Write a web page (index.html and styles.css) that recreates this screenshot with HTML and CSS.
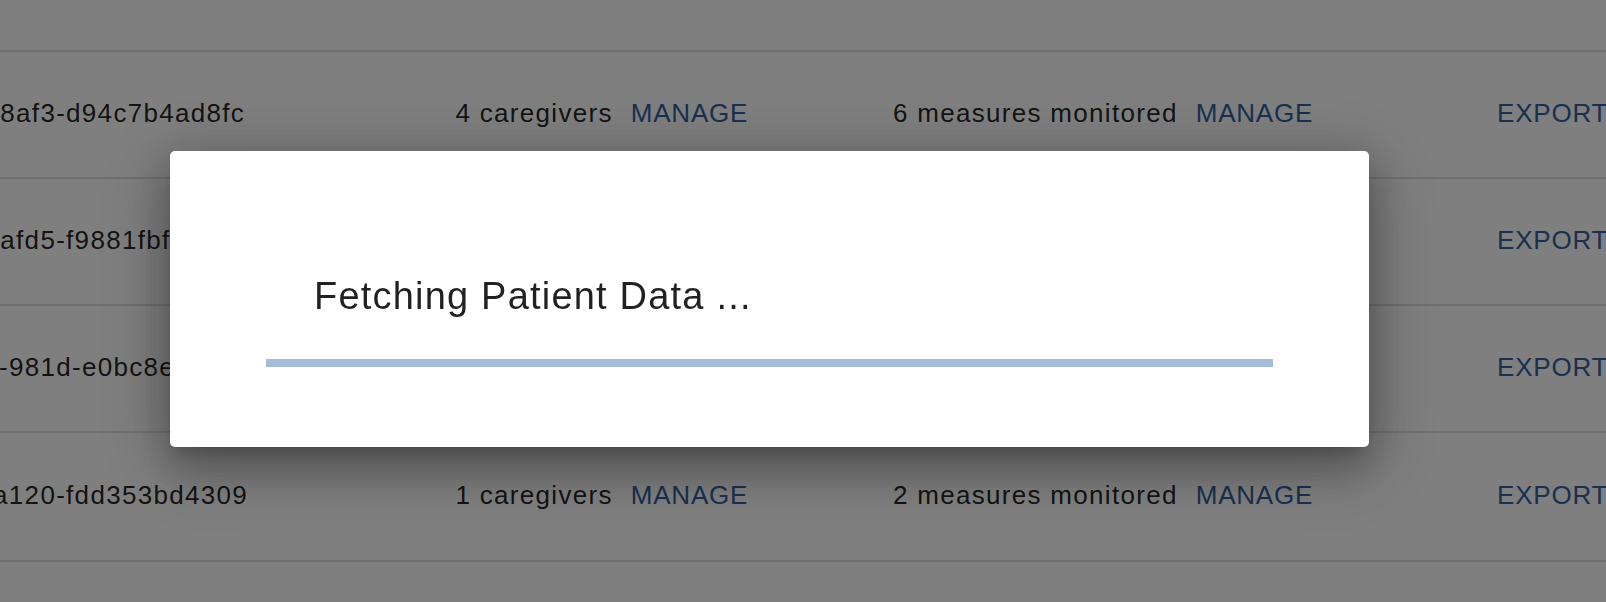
FILE: index.html
```html
<!DOCTYPE html>
<html lang="en">
<head>
<meta charset="utf-8">
<title>Patients</title>
<link rel="stylesheet" href="styles.css">
</head>
<body>
<main class="page">
  <div class="table">
    <div class="row">
      <div class="cell cell-id">4b8e21d7-3c9a-4e5d-b260-c7e4f19a83d5</div>
      <div class="cell"><span>3 caregivers</span><button class="link">MANAGE</button></div>
      <div class="cell"><span>4 measures monitored</span><button class="link">MANAGE</button></div>
      <div class="cell"><button class="link">EXPORT</button></div>
    </div>
    <div class="row">
      <div class="cell cell-id">5e0b27c4-9d1a-4f6e-8af3-d94c7b4ad8fc</div>
      <div class="cell"><span>4 caregivers</span><button class="link">MANAGE</button></div>
      <div class="cell"><span>6 measures monitored</span><button class="link">MANAGE</button></div>
      <div class="cell"><button class="link">EXPORT</button></div>
    </div>
    <div class="row">
      <div class="cell cell-id">a7c2e915-6b0d-4f83-afd5-f9881fbf2a6e</div>
      <div class="cell"><span>2 caregivers</span><button class="link">MANAGE</button></div>
      <div class="cell"><span>3 measures monitored</span><button class="link">MANAGE</button></div>
      <div class="cell"><button class="link">EXPORT</button></div>
    </div>
    <div class="row">
      <div class="cell cell-id">d2e84b07-1e5a-4b39-981d-e0bc8e6f4a27</div>
      <div class="cell"><span>5 caregivers</span><button class="link">MANAGE</button></div>
      <div class="cell"><span>4 measures monitored</span><button class="link">MANAGE</button></div>
      <div class="cell"><button class="link">EXPORT</button></div>
    </div>
    <div class="row row-tall">
      <div class="cell cell-id">6c0e3b9d-2a4f-4f71-a120-fdd353bd4309</div>
      <div class="cell"><span>1 caregivers</span><button class="link">MANAGE</button></div>
      <div class="cell"><span>2 measures monitored</span><button class="link">MANAGE</button></div>
      <div class="cell"><button class="link">EXPORT</button></div>
    </div>
  </div>
</main>

<div class="backdrop">
  <div class="dialog" role="dialog" aria-label="Loading">
    <h2 class="dialog-title">Fetching Patient Data ...</h2>
    <div class="progress"></div>
  </div>
</div>
</body>
</html>
```

FILE: styles.css
```css
html, body {
  margin: 0;
  padding: 0;
  background: #ffffff;
  overflow: hidden;
}

body {
  width: 1606px;
  height: 602px;
  font-family: "Liberation Sans", Arial, Helvetica, sans-serif;
  color: rgba(0, 0, 0, 0.87);
}

.page {
  width: 100%;
  height: 100%;
  overflow: hidden;
}

.table {
  margin-top: -75px;
  margin-left: -273px;
  width: 2200px;
}

.row {
  display: grid;
  grid-template-columns: 728.5px 437.5px 604px 1fr;
  height: 125px;
  border-bottom: 2px solid #e0e0e0;
}

.row-tall {
  height: 127px;
}

.cell {
  display: flex;
  align-items: center;
  gap: 18px;
  padding-bottom: 3px;
  font-size: 26px;
  letter-spacing: 1.3px;
  line-height: 30px;
  white-space: nowrap;
}

.link {
  border: 0;
  background: none;
  padding: 0;
  margin: 0;
  font: inherit;
  letter-spacing: 0.8px;
  color: #32619f;
  cursor: pointer;
}

.backdrop {
  position: fixed;
  inset: 0;
  background: rgba(0, 0, 0, 0.5);
  display: flex;
  align-items: flex-start;
  justify-content: flex-start;
  padding: 151px 0 0 170px;
  box-sizing: border-box;
}

.dialog {
  width: 1199px;
  box-sizing: border-box;
  padding: 123px 96px 80px;
  background: #ffffff;
  border-radius: 5px;
  box-shadow: 0px 11px 15px -7px rgba(0, 0, 0, 0.2),
              0px 24px 38px 3px rgba(0, 0, 0, 0.14),
              0px 9px 46px 8px rgba(0, 0, 0, 0.12),
              0px 16px 70px 14px rgba(0, 0, 0, 0.16);
}

.dialog-title {
  margin: 0 0 41px;
  padding-left: 48px;
  font-size: 38px;
  font-weight: 400;
  letter-spacing: 1.2px;
  line-height: 44px;
  color: rgba(0, 0, 0, 0.87);
}

.progress {
  height: 8px;
  background: #a6bdd7;
}
```
